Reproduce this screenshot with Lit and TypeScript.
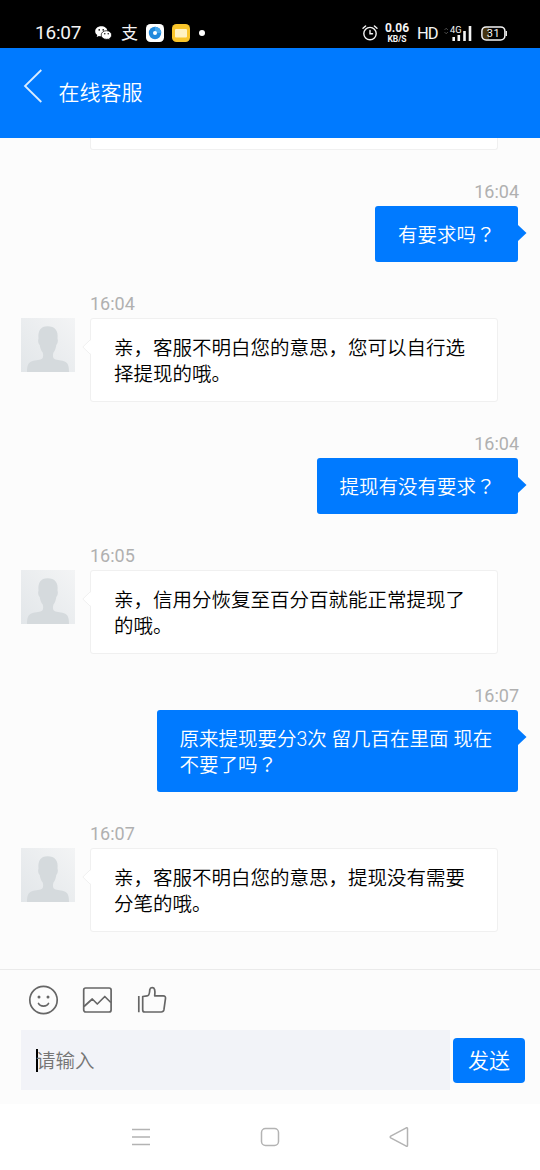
import { LitElement, html, css, svg } from "lit";
import { customElement, property } from "lit/decorators.js";

interface Message {
  from: "agent" | "user";
  time: string;
  text: string;
}

const MESSAGES: Message[] = [
  { from: "user", time: "16:04", text: "有要求吗？" },
  { from: "agent", time: "16:04", text: "亲，客服不明白您的意思，您可以自行选择提现的哦。" },
  { from: "user", time: "16:04", text: "提现有没有要求？" },
  { from: "agent", time: "16:05", text: "亲，信用分恢复至百分百就能正常提现了的哦。" },
  { from: "user", time: "16:07", text: "原来提现要分3次 留几百在里面 现在\n不要了吗？" },
  { from: "agent", time: "16:07", text: "亲，客服不明白您的意思，提现没有需要分笔的哦。" },
];

@customElement("status-bar")
export class StatusBar extends LitElement {
  static styles = css`
    :host { display: flex; height: 48px; box-sizing: border-box; padding: 18px 33px 0 35px; background: #000; color: #f4f4f4; justify-content: space-between; }
    .group { display: flex; align-items: center; height: 30px; }
    svg { display: block; flex: none; }
    .clock { font-size: 19px; line-height: 30px; width: 60px; letter-spacing: -0.2px; }
    .alipay { font-size: 17px; line-height: 26px; width: 17px; margin: 0 8px 0 9px; font-weight: 400; }
    .app { margin-right: 8px; }
    .dot { margin-left: 1px; }
    .speed { width: 26px; margin: 0 7px 0 6px; text-align: center; font-weight: 700; }
    .rate { font-size: 12px; line-height: 13px; height: 11px; }
    .rate, .unit { display: block; }
    .unit { font-size: 8.5px; line-height: 10px; margin-top: 1px; }
    .hd { font-size: 16.500px; width: 20px; margin-right: 7px; letter-spacing: -1px; }
    .cell { margin-right: 9px; }
    .battery { width: 26px; height: 15px; display: grid; place-items: center; }
    .battery svg, .level { grid-area: 1 / 1; }
    .level { font-size: 11px; line-height: 15px; letter-spacing: 0.6px; padding-right: 1px; }
  `;
  render() {
    return html`
      <div class="group">
        <span class="clock">16:07</span>
        <svg width="17" height="15" viewBox="0 0 17 15">
          <path d="M6.2.3C2.8.3.2 2.500.2 5.300c0 1.600.8 2.900 2.100 3.800L1.700 11l2.200-1.100c.7.2 1.400.3 2.200.3 3.500 0 6.300-2.200 6.300-5S9.700.3 6.200.3Z" fill="#fff" />
          <path d="M11.500 4.700c-3 0-5.300 1.900-5.300 4.300s2.300 4.300 5.300 4.300c.6 0 1.200-.1 1.700-.2l1.800 1-.5-1.700c1.300-.8 2.100-2 2.100-3.400 0-2.400-2.200-4.300-5.100-4.300Z" fill="#fff" stroke="#000" stroke-width=".7" />
          <circle cx="4.200" cy="3.900" r=".8" /><circle cx="8.200" cy="3.900" r=".8" />
          <circle cx="9.800" cy="7.800" r=".7" /><circle cx="13.200" cy="7.800" r=".7" />
        </svg>
        <span class="alipay">支</span>
        <svg class="app" width="18" height="18" viewBox="0 0 18 18">
          <rect width="18" height="18" rx="4.500" fill="#fff" />
          <circle cx="9" cy="9" r="6.200" fill="#2189dc" /><path d="M9 2.800A6.200 6.200 0 0 1 15.200 9H9Z" fill="#45a7ee" />
          <circle cx="9" cy="9" r="2" fill="#fff" />
        </svg>
        <svg class="app" width="18" height="18" viewBox="0 0 18 18">
          <rect width="18" height="18" rx="4.500" fill="#f9c52b" />
          <rect x="3" y="5" width="12" height="8.500" rx="1" fill="#fff2c2" />
        </svg>
        <svg class="dot" width="6" height="6" viewBox="0 0 6 6"><circle cx="3" cy="3" r="3" fill="#fff" /></svg>
      </div>
      <div class="group">
        <svg width="16" height="16" viewBox="0 0 16 16" fill="none" stroke="#f4f4f4" stroke-width="1.400" stroke-linecap="round">
          <circle cx="8" cy="8.600" r="6.200" /><path d="M8 5.500v3.300h2.500M1 3.300 3.600 1M15 3.300 12.400 1" />
        </svg>
        <div class="speed"><span class="rate">0.06</span><span class="unit">KB/S</span></div>
        <span class="hd">HD</span>
        <svg class="cell" width="28" height="17" viewBox="0 0 28 17">
          <path d="m.5 5 1.700-1.800L3.900 5M.5 7l1.700 1.800L3.900 7" fill="none" stroke="#555" stroke-width=".9" />
          <text x="6" y="7.500" font-size="9.500" fill="#f4f4f4" textLength="11.500" lengthAdjust="spacingAndGlyphs">4G</text>
          <path d="M9.700 12v4M14.800 10v6M20.500 6V16M26 1v15" stroke="#f4f4f4" stroke-width="2.600" />
        </svg>
        <div class="battery">
          <svg width="26" height="15" viewBox="0 0 26 15">
            <path d="M5 1.500h3v12H5a3.500 3.500 0 0 1-3.500-3.500V5A3.500 3.500 0 0 1 5 1.500Z" fill="#463411" />
            <rect x=".9" y=".9" width="23" height="13" rx="4.200" fill="none" stroke="#f4f4f4" stroke-width="1.500" />
            <path d="M25.300 5v5" stroke="#f4f4f4" stroke-width="1.300" />
          </svg>
          <span class="level">31</span>
        </div>
      </div>
    `;
  }
}

@customElement("chat-message")
export class ChatMessage extends LitElement {
  @property({ type: Object }) message!: Message;

  static styles = css`
    :host { display: block; margin-bottom: 28px; }
    .row { display: flex; align-items: flex-start; }
    .agent { padding: 0 42px 0 21px; }
    .user { padding-right: 22px; flex-direction: column; align-items: flex-end; }
    .time { height: 28px; line-height: 27px; font-size: 18px; color: #b0b0b0; }
    .user .time { margin-right: -1px; }
    .avatar { display: block; flex: none; margin: 28px 15px 0 0; }
    .body { flex: 1; }
    .bubble { position: relative; box-sizing: border-box; border-radius: 3px; font-family: Roboto, "Noto Sans CJK SC DemiLight", "Noto Sans CJK SC", sans-serif; font-weight: 350; font-size: 19.500px; line-height: 26px; }
    .agent .bubble { border: 1.500px solid #f0f0f0; background: #fff; padding: 17px 21px 12px 23px; color: #000; height: 84px; }
    .user .bubble { background: #007aff; color: #fff; padding: 17px 22.500px 13px; max-width: 361px; }
    .user .wide { width: 361px; }
    .line { height: 26px; white-space: nowrap; }
    .mark { font-family: "Noto Sans CJK TC DemiLight", "Noto Sans CJK TC", sans-serif; line-height: 20px; }
    .tail { position: absolute; }
    .agent .tail { left: -9px; top: 19px; }
    .user .tail { right: -9px; top: 19px; }
  `;
  render() {
    const m = this.message;
    if (m.from === "user") {
      const lines = m.text.split("\n").map((line) => {
        const asks = line.endsWith("？");
        return html`<div class="line">${asks ? line.slice(0, -1) : line}${asks ? html`<span class="mark" lang="zh-TW">？</span>` : ""}</div>`;
      });
      return html`<div class="row user">
        <div class="time">${m.time}</div>
        <div class="bubble ${lines.length > 1 ? "wide" : ""}">${lines}<svg class="tail" width="10" height="16" viewBox="0 0 10 16"><path d="M0 0h1l8.500 8L1 16H0Z" fill="#007aff" /></svg></div>
      </div>`;
    }
    return html`<div class="row agent">
      <svg class="avatar" width="54" height="54" viewBox="0 0 54 54">
        <defs><linearGradient id="bg" x1="0" y1="1" x2="1" y2="0"><stop stop-color="#e2e6e9" /><stop offset="1" stop-color="#f3f4f5" /></linearGradient></defs>
        <rect width="54" height="54" fill="url(#bg)" />
        <path d="M6 54c0-7 1.500-9.800 5-10.800 4-1.200 8.500-1.200 10.300-2.700 1.200-1.200 1-4 .4-6-1.700-2-2.500-4.500-3-7.500-1.500-1.500-2-4.500-1.200-6.500C16.800 13 19.500 8.200 26.500 8.200c7.500 0 11 4.300 10 12.300.8 2 .2 5-1.200 6.500-.5 3-1.200 5.500-2.800 7.500-.7 2-.9 4.800.3 6 1.800 1.500 6.200 1.500 10.200 2.700 3.500 1 5 3.800 5 10.800Z" fill="#d5dadd" />
      </svg>
      <div class="body">
        <div class="time">${m.time}</div>
        <div class="bubble">${m.text}<svg class="tail" width="10" height="18" viewBox="0 0 10 18"><path d="M10 1 .8 9l9.200 8Z" fill="#fff" /><path d="M9 1 .8 9 9 17" fill="none" stroke="#f0f0f0" /></svg></div>
      </div>
    </div>`;
  }
}

@customElement("chat-composer")
export class ChatComposer extends LitElement {
  static styles = css`
    :host { display: block; height: 135px; box-sizing: border-box; border-top: 1.500px solid #eaeaea; background: #fcfcfc; }
    .tools { display: flex; gap: 24px; padding: 15.400px 0 0 28px; height: 60.400px; box-sizing: border-box; }
    .entry { display: flex; align-items: center; gap: 3px; padding: 0 15px 0 21px; }
    .field { flex: 1; height: 60px; box-sizing: border-box; background: #f2f3f8; display: flex; align-items: center; padding-left: 15px; }
    .caret { width: 1.500px; height: 23px; background: #000; margin-right: -1.500px; }
    .hint { font-size: 19.500px; line-height: 26px; color: #757575; font-weight: 350; font-family: "Noto Sans CJK SC DemiLight", "Noto Sans CJK SC", sans-serif; }
    .send { width: 72px; height: 45px; border: 0; padding: 0 0 3px; border-radius: 4px; background: #007aff; color: #fff; font-family: "Noto Sans CJK SC DemiLight", "Noto Sans CJK SC", sans-serif; font-weight: 350; font-size: 21px; line-height: 42px; }
  `;
  render() {
    return html`
      <div class="tools">
        ${[
          svg`<circle cx="15.500" cy="15" r="13.700" /><path d="M10.500 18.500c1.600 3.500 8.400 3.500 10 0" stroke-linecap="round" /><circle cx="11" cy="12" r="1.500" fill="#666" stroke="none" /><circle cx="20" cy="12" r="1.500" fill="#666" stroke="none" />`,
          svg`<rect x="1.700" y="3" width="27.400" height="24" rx="2" /><path d="M2 21.500 10.300 14l5 5 7.500-7.500 6 6" stroke-linejoin="round" />`,
          svg`<path d="M2.800 11v16.200M6.700 11.500v13.500c0 1.300.7 2 2 2h16.500c1.600 0 2.400-.7 2.700-2.100l1.600-11.500c.2-1.700-.6-2.600-2.300-2.600h-8.500c.4-2.400.4-4.500-.1-6.300-.8-2.600-4.300-2.500-4.800.2-.3 2.500-.1 6.100-2.600 6.100Z" stroke-linejoin="round" />`,
        ].map(
          (shape) => html`<svg width="30" height="30" viewBox="0 0 30 30" fill="none" stroke="#666" stroke-width="1.700" overflow="visible">${shape}</svg>`
        )}
      </div>
      <div class="entry">
        <div class="field"><span class="caret"></span><span class="hint">请输入</span></div>
        <button class="send">发送</button>
      </div>
    `;
  }
}

@customElement("app-root")
export class AppRoot extends LitElement {
  static styles = css`
    :host { display: flex; flex-direction: column; height: 1170px; width: 540px; overflow: hidden; background: #fcfcfc; font-family: Roboto, "Noto Sans CJK SC", sans-serif; }
    .header { height: 90px; box-sizing: border-box; padding: 21px 0 0 23px; display: flex; background: #007aff; color: #fff; }
    .back { display: block; margin-right: 15.500px; }
    .title { font-size: 21px; line-height: 30px; padding-top: 9px; font-weight: 350; font-family: Roboto, "Noto Sans CJK SC DemiLight", "Noto Sans CJK SC", sans-serif; }
    .thread { flex: 1; min-height: 0; overflow: hidden; }
    .previous { height: 12.400px; box-sizing: border-box; margin: 0 42px 28px 90px; background: #fff; border: 1.500px solid #f0f0f0; border-top: 0; border-radius: 0 0 3px 3px; }
    .nav { height: 66px; background: #fff; display: flex; align-items: center; gap: 109px; padding-left: 131px; box-sizing: border-box; }
  `;
  render() {
    return html`
      <status-bar></status-bar>
      <div class="header">
        <svg class="back" width="20" height="34" viewBox="0 0 20 34" fill="none" stroke="#d9ecff" stroke-width="1.800"><path d="M18.300 1 2 17l16.300 16" /></svg>
        <div class="title">在线客服</div>
      </div>
      <div class="thread">
        <div class="previous"></div>
        ${MESSAGES.map((m) => html`<chat-message .message=${m}></chat-message>`)}
      </div>
      <chat-composer></chat-composer>
      <div class="nav">
        <svg width="20" height="20" viewBox="0 0 20 20" stroke="#b3b3b3" stroke-width="1.500"><path d="M1 2.500h18M1 10h18M1 17.500h18" /></svg>
        <svg width="20" height="20" viewBox="0 0 20 20" fill="none" stroke="#b3b3b3" stroke-width="1.500"><rect x="1.500" y="1.500" width="17" height="17" rx="4" /></svg>
        <svg width="20" height="22" viewBox="0 0 20 22" fill="none" stroke="#b3b3b3" stroke-width="1.500" stroke-linejoin="round"><path d="M17.300 1.800 1.700 10.200q-1 .8 0 1.600l15.600 8.400q1.200.4 1.200-1V2.800q0-1.400-1.200-1Z" /></svg>
      </div>
    `;
  }
}
